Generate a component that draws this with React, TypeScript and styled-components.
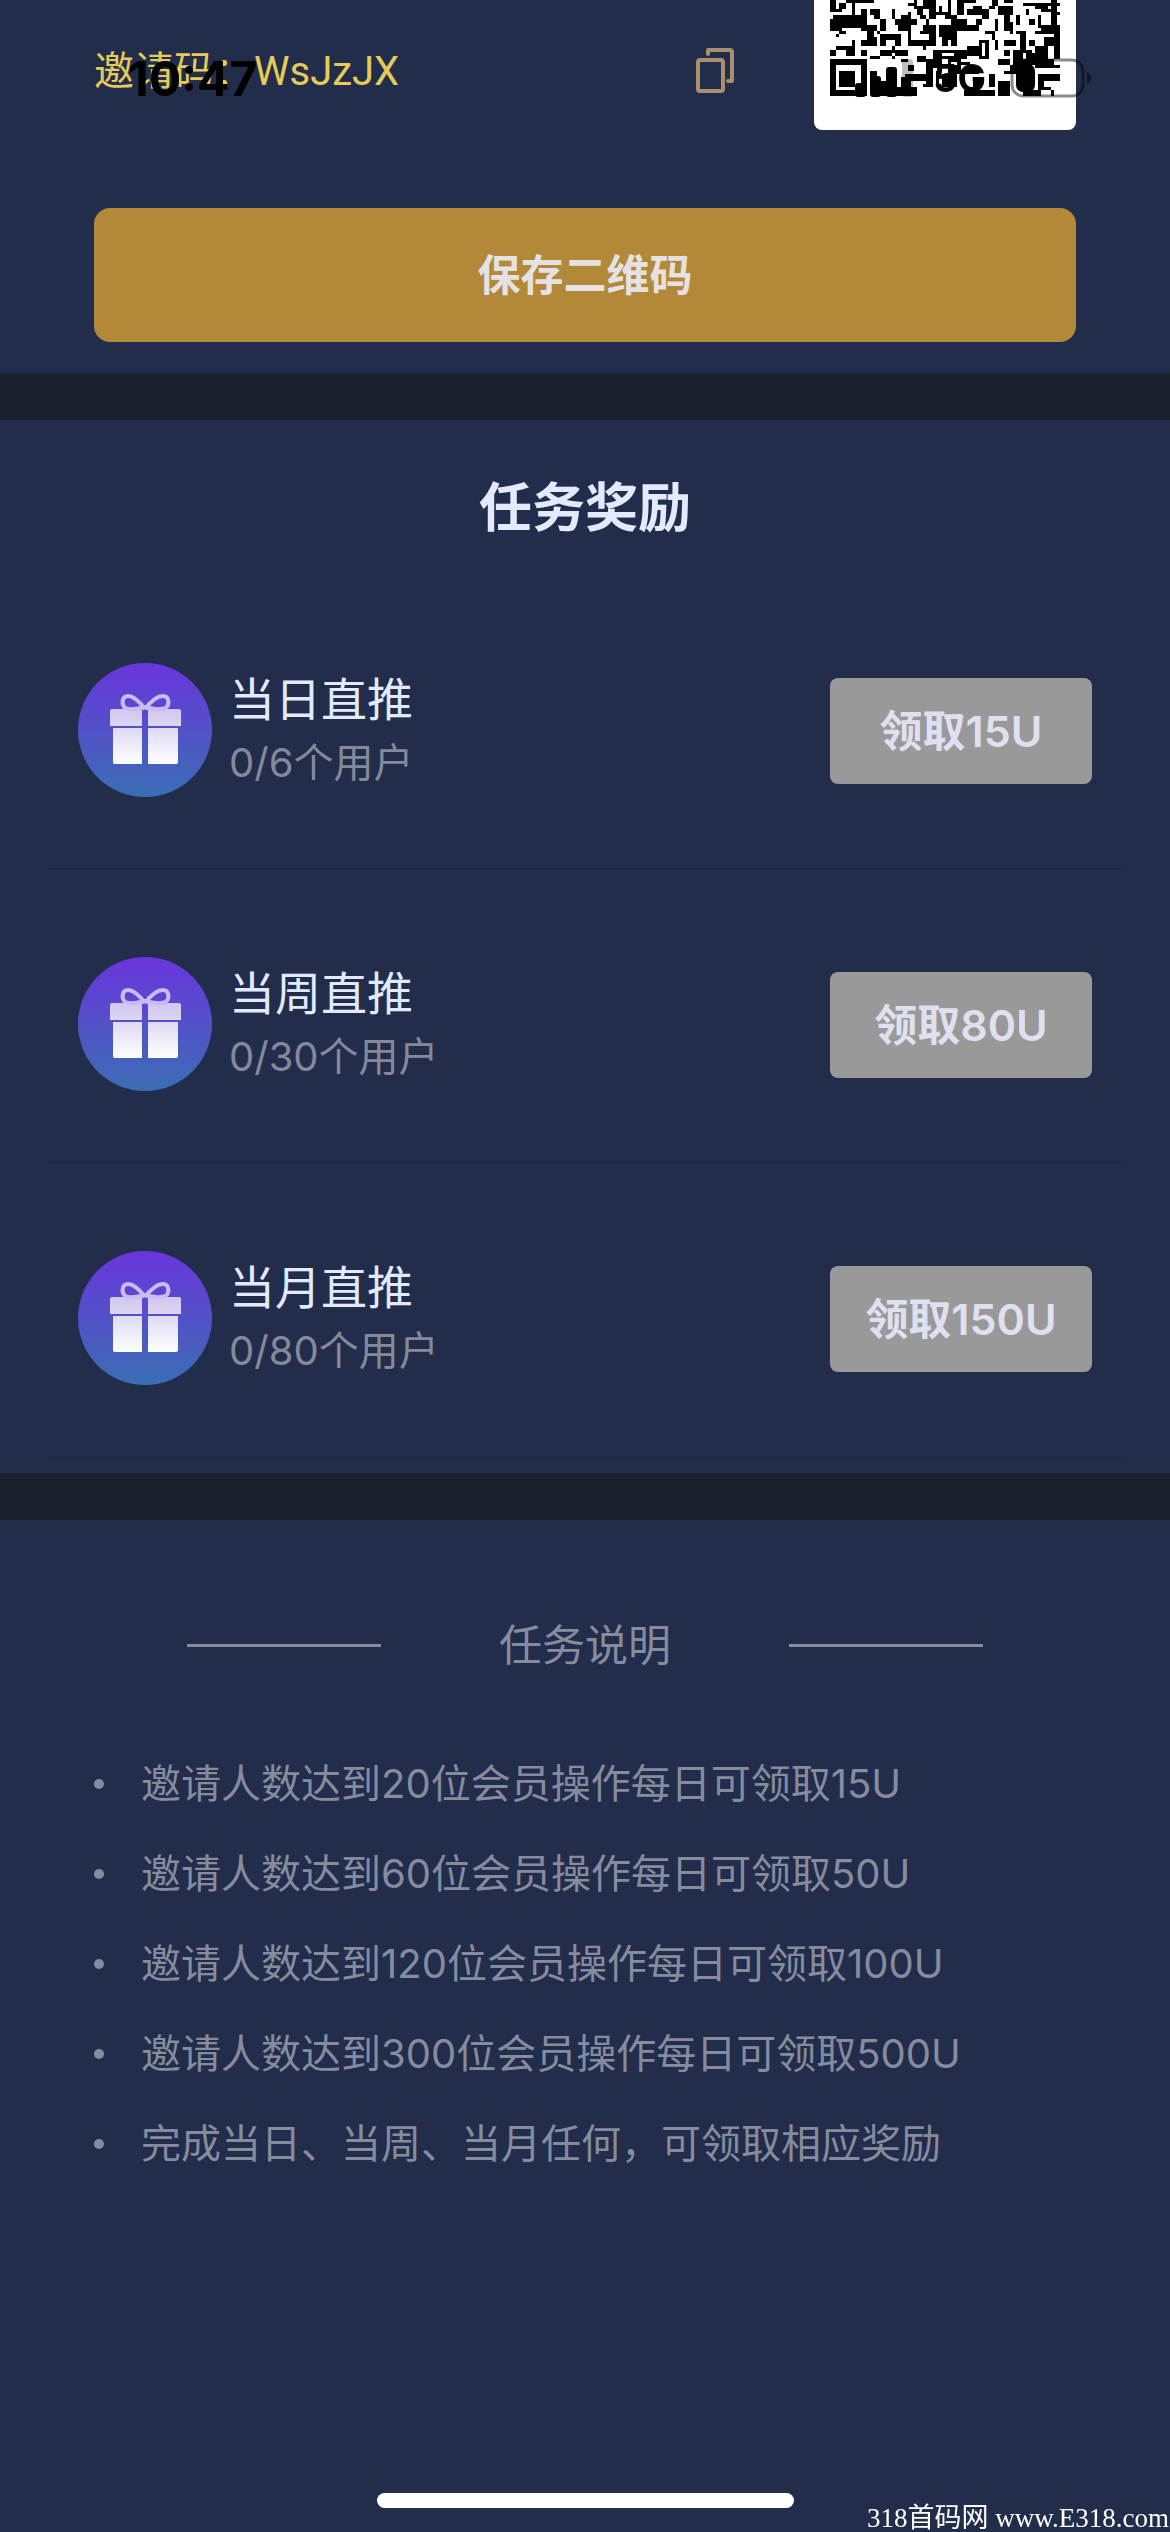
import React from "react";
import styled, { createGlobalStyle } from "styled-components";

const cjk = `"Noto Sans CJK SC", sans-serif`;

const GlobalStyle = createGlobalStyle`
  *, *::before, *::after { box-sizing: border-box; }
  body {
    margin: 0;
    background: #222d4b;
    font-family: Inter, ${cjk};
    color: #e2eaff;
  }
  h1, h2, p, ul { margin: 0; padding: 0; font-weight: 400; }
  button { border: 0; padding: 0; background: none; font: inherit; color: inherit; cursor: pointer; }
`;

const Page = styled.main`
  min-height: 100vh;
`;

const Section = styled.section`
  border-bottom: 47px solid #1a202d;
`;

const InviteSection = styled(Section)`
  padding: 0 94px 31px;
`;

const InviteRow = styled.div`
  display: flex;
  align-items: flex-start;
  margin-bottom: 78px;
`;

const InviteCode = styled.p`
  flex: 1;
  padding-top: 42px;
  font-family: Roboto, ${cjk};
  font-size: 40px;
  line-height: 60px;
  color: #e6cb58;
`;

const CopyButton = styled.button`
  display: flex;
  margin: 48px 80px 0 0;
`;

const QrCard = styled.div`
  width: 262px;
  height: 130px;
  padding: 0 16px;
  border-radius: 0 0 8px 8px;
  background: #fff;
`;

const SaveButton = styled.button`
  display: block;
  width: 100%;
  height: 134px;
  padding-bottom: 6px;
  border-radius: 16px;
  background: #b28839;
  font-size: 43px;
  font-weight: 600;
  color: #e6e2e4;
`;

const RewardSection = styled(Section)`
  padding: 48px 48px 16px;
`;

const RewardTitle = styled.h1`
  margin-bottom: 27px;
  font-size: 53px;
  font-weight: 600;
  line-height: 80px;
  text-align: center;
`;

const TaskList = styled.ul`
  list-style: none;
`;

const TaskRow = styled.li`
  display: flex;
  align-items: center;
  gap: 16px;
  padding: 88px 30px 70px;
  border-bottom: 1px solid #1a2340;
`;

const TaskText = styled.div`
  flex: 1;
  line-height: 64px;
`;

const TaskName = styled.h2`
  font-size: 46px;
`;

const TaskProgress = styled.p`
  font-size: 40px;
  color: #848a99;
`;

const ClaimButton = styled.button`
  width: 262px;
  height: 106px;
  padding-bottom: 6px;
  border-radius: 8px;
  background: #999;
  font-size: 43px;
  font-weight: 600;
  color: #e0e1f0;
`;

const NotesSection = styled.section`
  padding: 92px 94px 120px;
`;

const NotesHeading = styled.div`
  display: flex;
  align-items: center;
  justify-content: space-between;
  margin: 0 93px 61px;
  color: #858c9e;
`;

const Rule = styled.span`
  width: 194px;
  height: 3px;
  background: #858c9e;
`;

const NotesTitle = styled.h2`
  font-size: 43px;
  line-height: 66px;
`;

const NoteList = styled.ul`
  list-style: none;
`;

const Note = styled.li`
  display: flex;
  align-items: center;
  gap: 37px;
  font-size: 40px;
  line-height: 90px;
  color: #858c9e;

  &::before {
    content: "";
    width: 10px;
    height: 10px;
    border-radius: 50%;
    background: #858c9e;
  }
`;

const StatusBar = styled.div`
  position: fixed;
  inset: 0 0 auto;
  display: flex;
  align-items: center;
  justify-content: space-between;
  height: 156px;
  padding: 0 79px 0 128px;
  color: #000;
  pointer-events: none;
`;

const Clock = styled.span`
  font-size: 48px;
  font-weight: 700;
`;

const StatusIcons = styled.div`
  display: flex;
  align-items: center;
`;

const Network = styled.span`
  margin: 0 24px 0 20px;
  font-size: 38px;
  font-weight: 700;
  line-height: 40px;
`;

const HomeIndicator = styled.div`
  position: fixed;
  bottom: 24px;
  left: 50%;
  width: 417px;
  height: 15px;
  margin-left: -208px;
  border-radius: 8px;
  background: #fff;
`;

const Watermark = styled.div`
  position: fixed;
  right: 1px;
  bottom: 0;
  font-family: "Liberation Serif", "Noto Sans CJK SC", serif;
  font-size: 27px;
  line-height: 27px;
  color: #fff;
`;

type Block = [number, number, number, number];

const qrBlocks: Block[] = [
  [0, 0, 2, 4], [0, 3, 4, 1], [3, 1, 2, 2], [5, 0, 2, 1], [7, 0, 1, 5], [8, 0, 6, 1], [10, 3, 2, 2], [13, 3, 3, 2],
  [1, 5, 11, 2], [0, 6, 12, 3], [0, 9, 4, 1], [2, 11, 1, 1], [3, 10, 2, 1], [10, 9, 4, 1], [12, 8, 3, 2], [12, 10, 2, 3],
  [15, 10, 1, 1], [10, 13, 5, 2], [12, 12, 3, 3], [14, 5, 2, 1], [16, 6, 2, 4], [16, 11, 7, 2], [16, 11, 2, 4], [21, 11, 2, 4],
  [2, 15, 5, 1], [7, 13, 1, 5], [5, 15, 3, 3], [0, 16, 2, 2], [10, 16, 2, 2], [13, 18, 3, 1], [16, 16, 4, 2], [20, 15, 1, 2],
  [21, 16, 4, 2], [20, 18, 1, 1], [20, 3, 1, 3], [21, 6, 4, 2], [22, 8, 3, 2], [23, 5, 3, 1], [25, 1, 3, 1], [27, 0, 1, 3],
  [28, 2, 2, 3], [25, 4, 1, 11], [25, 13, 8, 2], [26, 6, 2, 2], [29, 5, 2, 1], [30, 8, 4, 2], [29, 10, 4, 1], [32, 10, 2, 5],
  [30, 0, 4, 3], [32, 3, 2, 3], [35, 2, 1, 3], [31, 6, 1, 2], [35, 10, 4, 2], [36, 12, 4, 1], [30, 15, 1, 1],
  [38, 0, 1, 5], [34, 4, 5, 1], [41, 0, 2, 5], [43, 0, 4, 1], [44, 3, 4, 2], [46, 2, 3, 1], [48, 3, 3, 2], [52, 0, 2, 2],
  [51, 2, 2, 1], [56, 0, 3, 1], [54, 2, 5, 3], [62, 1, 4, 1], [66, 1, 4, 2], [70, 1, 4, 1], [71, 0, 2, 4], [68, 3, 4, 1],
  [71, 4, 3, 1], [63, 3, 1, 2], [37, 5, 4, 1], [39, 6, 2, 6], [35, 8, 13, 2], [41, 6, 3, 2], [47, 6, 2, 2], [49, 5, 2, 1],
  [50, 10, 3, 1], [52, 11, 1, 2], [53, 6, 1, 4], [56, 5, 2, 5], [58, 7, 1, 4], [60, 5, 1, 3], [64, 6, 2, 2], [67, 5, 1, 4],
  [68, 8, 6, 2], [71, 5, 2, 4], [60, 10, 3, 1], [66, 10, 8, 1], [61, 10, 2, 8], [64, 13, 2, 2], [72, 10, 2, 3], [69, 12, 5, 3],
  [66, 15, 4, 2], [72, 15, 2, 4], [56, 13, 4, 2], [56, 16, 2, 2], [53, 13, 1, 3], [36, 13, 2, 2], [39, 12, 2, 3], [33, 16, 11, 3],
  [44, 15, 4, 3], [48, 13, 3, 6], [23, 19, 2, 1], [25, 21, 2, 2], [28, 18, 3, 2], [31, 19, 5, 2], [31, 21, 7, 1], [35, 18, 1, 4],
  [38, 18, 4, 6], [24, 24, 9, 2], [31, 22, 2, 6], [13, 23, 2, 4], [14, 26, 5, 5], [20, 28, 8, 3], [23, 25, 3, 3], [34, 23, 1, 5],
  [30, 27, 3, 1], [42, 20, 3, 1], [43, 22, 5, 2], [36, 24, 5, 4], [46, 25, 2, 3], [43, 29, 10, 2], [51, 24, 2, 4], [54, 26, 4, 5],
  [54, 19, 4, 2], [56, 23, 5, 1], [59, 16, 6, 6], [65, 17, 5, 4], [66, 19, 6, 3], [58, 21, 4, 2], [72, 21, 2, 1], [67, 24, 7, 2],
  [67, 26, 2, 3], [69, 28, 2, 1], [62, 29, 6, 2], [71, 29, 1, 2],
  [0, 19, 12, 2], [0, 21, 2, 8], [10, 21, 2, 8], [0, 29, 12, 2], [3, 23, 5, 5],
];

const qrHoles: Block[] = [[4, 16, 1, 1], [39, 20, 2, 1], [49, 14, 1, 4], [62, 17, 1, 2], [36, 17, 4, 1]];

function QrCode() {
  return (
    <svg width="230" height="96" viewBox="0 0 74 31" preserveAspectRatio="none" shapeRendering="crispEdges" role="img" aria-label="二维码">
      {qrBlocks.map(([x, y, w, h], i) => (
        <rect key={i} x={x} y={y} width={w} height={h} fill="#000" />
      ))}
      {qrHoles.map(([x, y, w, h], i) => (
        <rect key={i} x={x} y={y} width={w} height={h} fill="#fff" />
      ))}
    </svg>
  );
}

function CopyIcon() {
  return (
    <svg width="38" height="45" viewBox="0 0 38 45" fill="none" stroke="#a8906f" strokeWidth="4" strokeLinecap="round" strokeLinejoin="round">
      <rect x="2" y="12" width="25" height="31" rx="2" />
      <path d="M12 6V2h22a2 2 0 0 1 2 2v29h-4" />
    </svg>
  );
}

function GiftIcon({ id }: { id: string }) {
  return (
    <svg width="135" height="135" viewBox="0 0 135 135">
      <defs>
        <linearGradient id={`${id}-disc`} x1="0" y1="0" x2="0" y2="1">
          <stop offset="0" stopColor="#6a35dc" />
          <stop offset="1" stopColor="#3a6eb4" />
        </linearGradient>
        <linearGradient id={`${id}-lid`} x1="0" y1="0" x2="0" y2="1">
          <stop offset="0" stopColor="#d2c6f0" />
          <stop offset="1" stopColor="#dcd6f2" />
        </linearGradient>
        <linearGradient id={`${id}-box`} gradientUnits="userSpaceOnUse" x1="0" y1="65" x2="0" y2="101">
          <stop offset="0" stopColor="#dedaf3" />
          <stop offset="1" stopColor="#ffffff" />
        </linearGradient>
      </defs>
      <circle cx="67" cy="67" r="67" fill={`url(#${id}-disc)`} />
      <g fill={`url(#${id}-lid)`}>
        <path d="M34 46h30v17H32V48q0-2 2-2z" />
        <path d="M70 46h31q2 0 2 2v15H70z" />
      </g>
      <g fill={`url(#${id}-box)`}>
        <path d="M35 65h29v36H37q-2 0-2-2z" />
        <path d="M70 65h30v34q0 2-2 2H70z" />
      </g>
      <path
        d="M67 46C61 38 55 33 50 33C44 33 43 41 47 45M67 46C73 38 80 33 85 33C91 33 92 41 88 45M47 45C52 47 60 46 67 44C74 46 82 47 88 45"
        fill="none"
        stroke="#cabbf3"
        strokeWidth="4"
        strokeLinejoin="round"
      />
    </svg>
  );
}

function SignalIcon() {
  return (
    <svg width="58" height="38" viewBox="0 0 58 38">
      <rect x="0" y="24" width="11" height="14" rx="3" />
      <rect x="15" y="17" width="11" height="21" rx="3" />
      <rect x="31" y="8" width="11" height="30" rx="3" />
      <rect x="47" y="0" width="11" height="38" rx="3" opacity="0.25" />
    </svg>
  );
}

function BatteryIcon() {
  return (
    <svg width="81" height="40" viewBox="0 0 81 40">
      <rect x="2" y="2" width="71" height="36" rx="11" fill="none" stroke="#000" strokeOpacity="0.45" strokeWidth="3" />
      <rect x="6" y="6" width="19" height="28" rx="7" />
      <path d="M77 14q4 2 4 6t-4 6z" opacity="0.5" />
    </svg>
  );
}

const tasks = [
  { id: "day", name: "当日直推", progress: "0/6个用户", action: "领取15U" },
  { id: "week", name: "当周直推", progress: "0/30个用户", action: "领取80U" },
  { id: "month", name: "当月直推", progress: "0/80个用户", action: "领取150U" },
];

const notes = [
  "邀请人数达到20位会员操作每日可领取15U",
  "邀请人数达到60位会员操作每日可领取50U",
  "邀请人数达到120位会员操作每日可领取100U",
  "邀请人数达到300位会员操作每日可领取500U",
  "完成当日、当周、当月任何，可领取相应奖励",
];

export default function App() {
  return (
    <>
      <GlobalStyle />
      <Page lang="zh-CN">
        <InviteSection>
          <InviteRow>
            <InviteCode>邀请码：WsJzJX</InviteCode>
            <CopyButton type="button" aria-label="复制">
              <CopyIcon />
            </CopyButton>
            <QrCard>
              <QrCode />
            </QrCard>
          </InviteRow>
          <SaveButton type="button">保存二维码</SaveButton>
        </InviteSection>

        <RewardSection>
          <RewardTitle>任务奖励</RewardTitle>
          <TaskList>
            {tasks.map((task) => (
              <TaskRow key={task.id}>
                <GiftIcon id={task.id} />
                <TaskText>
                  <TaskName>{task.name}</TaskName>
                  <TaskProgress>{task.progress}</TaskProgress>
                </TaskText>
                <ClaimButton type="button">{task.action}</ClaimButton>
              </TaskRow>
            ))}
          </TaskList>
        </RewardSection>

        <NotesSection>
          <NotesHeading>
            <Rule />
            <NotesTitle>任务说明</NotesTitle>
            <Rule />
          </NotesHeading>
          <NoteList>
            {notes.map((note) => (
              <Note key={note}>{note}</Note>
            ))}
          </NoteList>
        </NotesSection>
      </Page>

      <StatusBar>
        <Clock>10:47</Clock>
        <StatusIcons>
          <SignalIcon />
          <Network>5G</Network>
          <BatteryIcon />
        </StatusIcons>
      </StatusBar>
      <HomeIndicator />
      <Watermark>318首码网 www.E318.com</Watermark>
    </>
  );
}
